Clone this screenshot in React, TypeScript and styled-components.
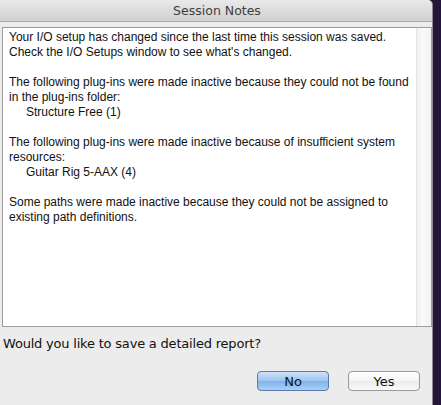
import React from "react";
import styled, {createGlobalStyle, css} from "styled-components";

const GlobalStyle = createGlobalStyle`
  html, body {
    margin: 0;
    padding: 0;
    background: #2c1c48;
  }
  #root {
    height: 405px;
    overflow: hidden;
  }
`;

const Desktop = styled.div`
  display: flex;
  height: 405px;
  background: linear-gradient(90deg, #331f55, #231538);
`;

const Window = styled.div`
  width: 433px;
  height: 405px;
  display: flex;
  flex-direction: column;
  background: #ececec;
  border-top-right-radius: 5px;
  box-sizing: border-box;
  border-right: 1px solid #8a8a8a;
`;

const TitleBar = styled.div`
  height: 22px;
  flex: none;
  display: flex;
  align-items: center;
  justify-content: center;
  background: linear-gradient(#e9e9e9, #d0d0d0);
  border-bottom: 1px solid #a8a8a8;
  border-top-right-radius: 5px;
  box-sizing: border-box;
  font-family: "DejaVu Sans", sans-serif;
  font-size: 12.5px;
  color: #3e3e3e;
  padding-left: 2px;
`;

const Body = styled.div`
  flex: 1;
  display: flex;
  flex-direction: column;
  padding: 5px 0 0 2px;
`;

const NotesBox = styled.div`
  height: 300px;
  display: flex;
  border: 1px solid #9c9c9c;
  box-sizing: border-box;
  background: #fff;
`;

const NotesText = styled.div`
  flex: 1;
  padding: 2px 0 0 6px;
  font-family: "Liberation Sans", Arial, sans-serif;
  font-size: 12px;
  line-height: 15px;
  color: #111;
`;

const Line = styled.div<{ $indent?: boolean }>`
  height: 15px;
  white-space: pre;
  ${(p) => p.$indent && css`padding-left: 17px;`}
`;

const Scroller = styled.div`
  width: 14px;
  flex: none;
  background: linear-gradient(90deg, #f0f0f0, #fafafa 40%, #f2f2f2);
  border-left: 1px solid #e4e4e4;
`;

const Prompt = styled.div`
  margin-top: 9px;
  padding-left: 1px;
  font-family: "DejaVu Sans", sans-serif;
  font-size: 13px;
  color: #111;
  letter-spacing: -0.2px;
`;

const ButtonRow = styled.div`
  display: flex;
  justify-content: flex-end;
  gap: 19px;
  margin-top: 20px;
  padding-right: 12px;
`;

const Button = styled.button<{ $primary?: boolean }>`
  width: 72px;
  height: 20px;
  padding: 0;
  border-radius: 4px;
  font-family: "DejaVu Sans", sans-serif;
  font-size: 13px;
  color: #111;
  box-sizing: border-box;
  ${(p) =>
    p.$primary
      ? css`
          border: 1px solid #5a7aa8;
          background: linear-gradient(#cfe2f8, #9cc4f0 50%, #7fb2ec 51%, #a9d0f8);
        `
      : css`
          border: 1px solid #9a9a9a;
          background: linear-gradient(#ffffff, #f4f4f4 50%, #ebebeb 51%, #fafafa);
        `}
`;

const notes: { text: string; indent?: boolean }[] = [
  { text: "Your I/O setup has changed since the last time this session was saved." },
  { text: "Check the I/O Setups window to see what's changed." },
  { text: "" },
  { text: "The following plug-ins were made inactive because they could not be found" },
  { text: "in the plug-ins folder:" },
  { text: "Structure Free (1)", indent: true },
  { text: "" },
  { text: "The following plug-ins were made inactive because of insufficient system" },
  { text: "resources:" },
  { text: "Guitar Rig 5-AAX (4)", indent: true },
  { text: "" },
  { text: "Some paths were made inactive because they could not be assigned to" },
  { text: "existing path definitions." },
];

export default function App() {
  return (
    <>
      <GlobalStyle />
      <Desktop>
        <Window>
          <TitleBar>Session Notes</TitleBar>
          <Body>
            <NotesBox>
              <NotesText>
                {notes.map((n, i) => (
                  <Line key={i} $indent={n.indent}>{n.text}</Line>
                ))}
              </NotesText>
              <Scroller />
            </NotesBox>
            <Prompt>Would you like to save a detailed report?</Prompt>
            <ButtonRow>
              <Button $primary>No</Button>
              <Button>Yes</Button>
            </ButtonRow>
          </Body>
        </Window>
      </Desktop>
    </>
  );
}
